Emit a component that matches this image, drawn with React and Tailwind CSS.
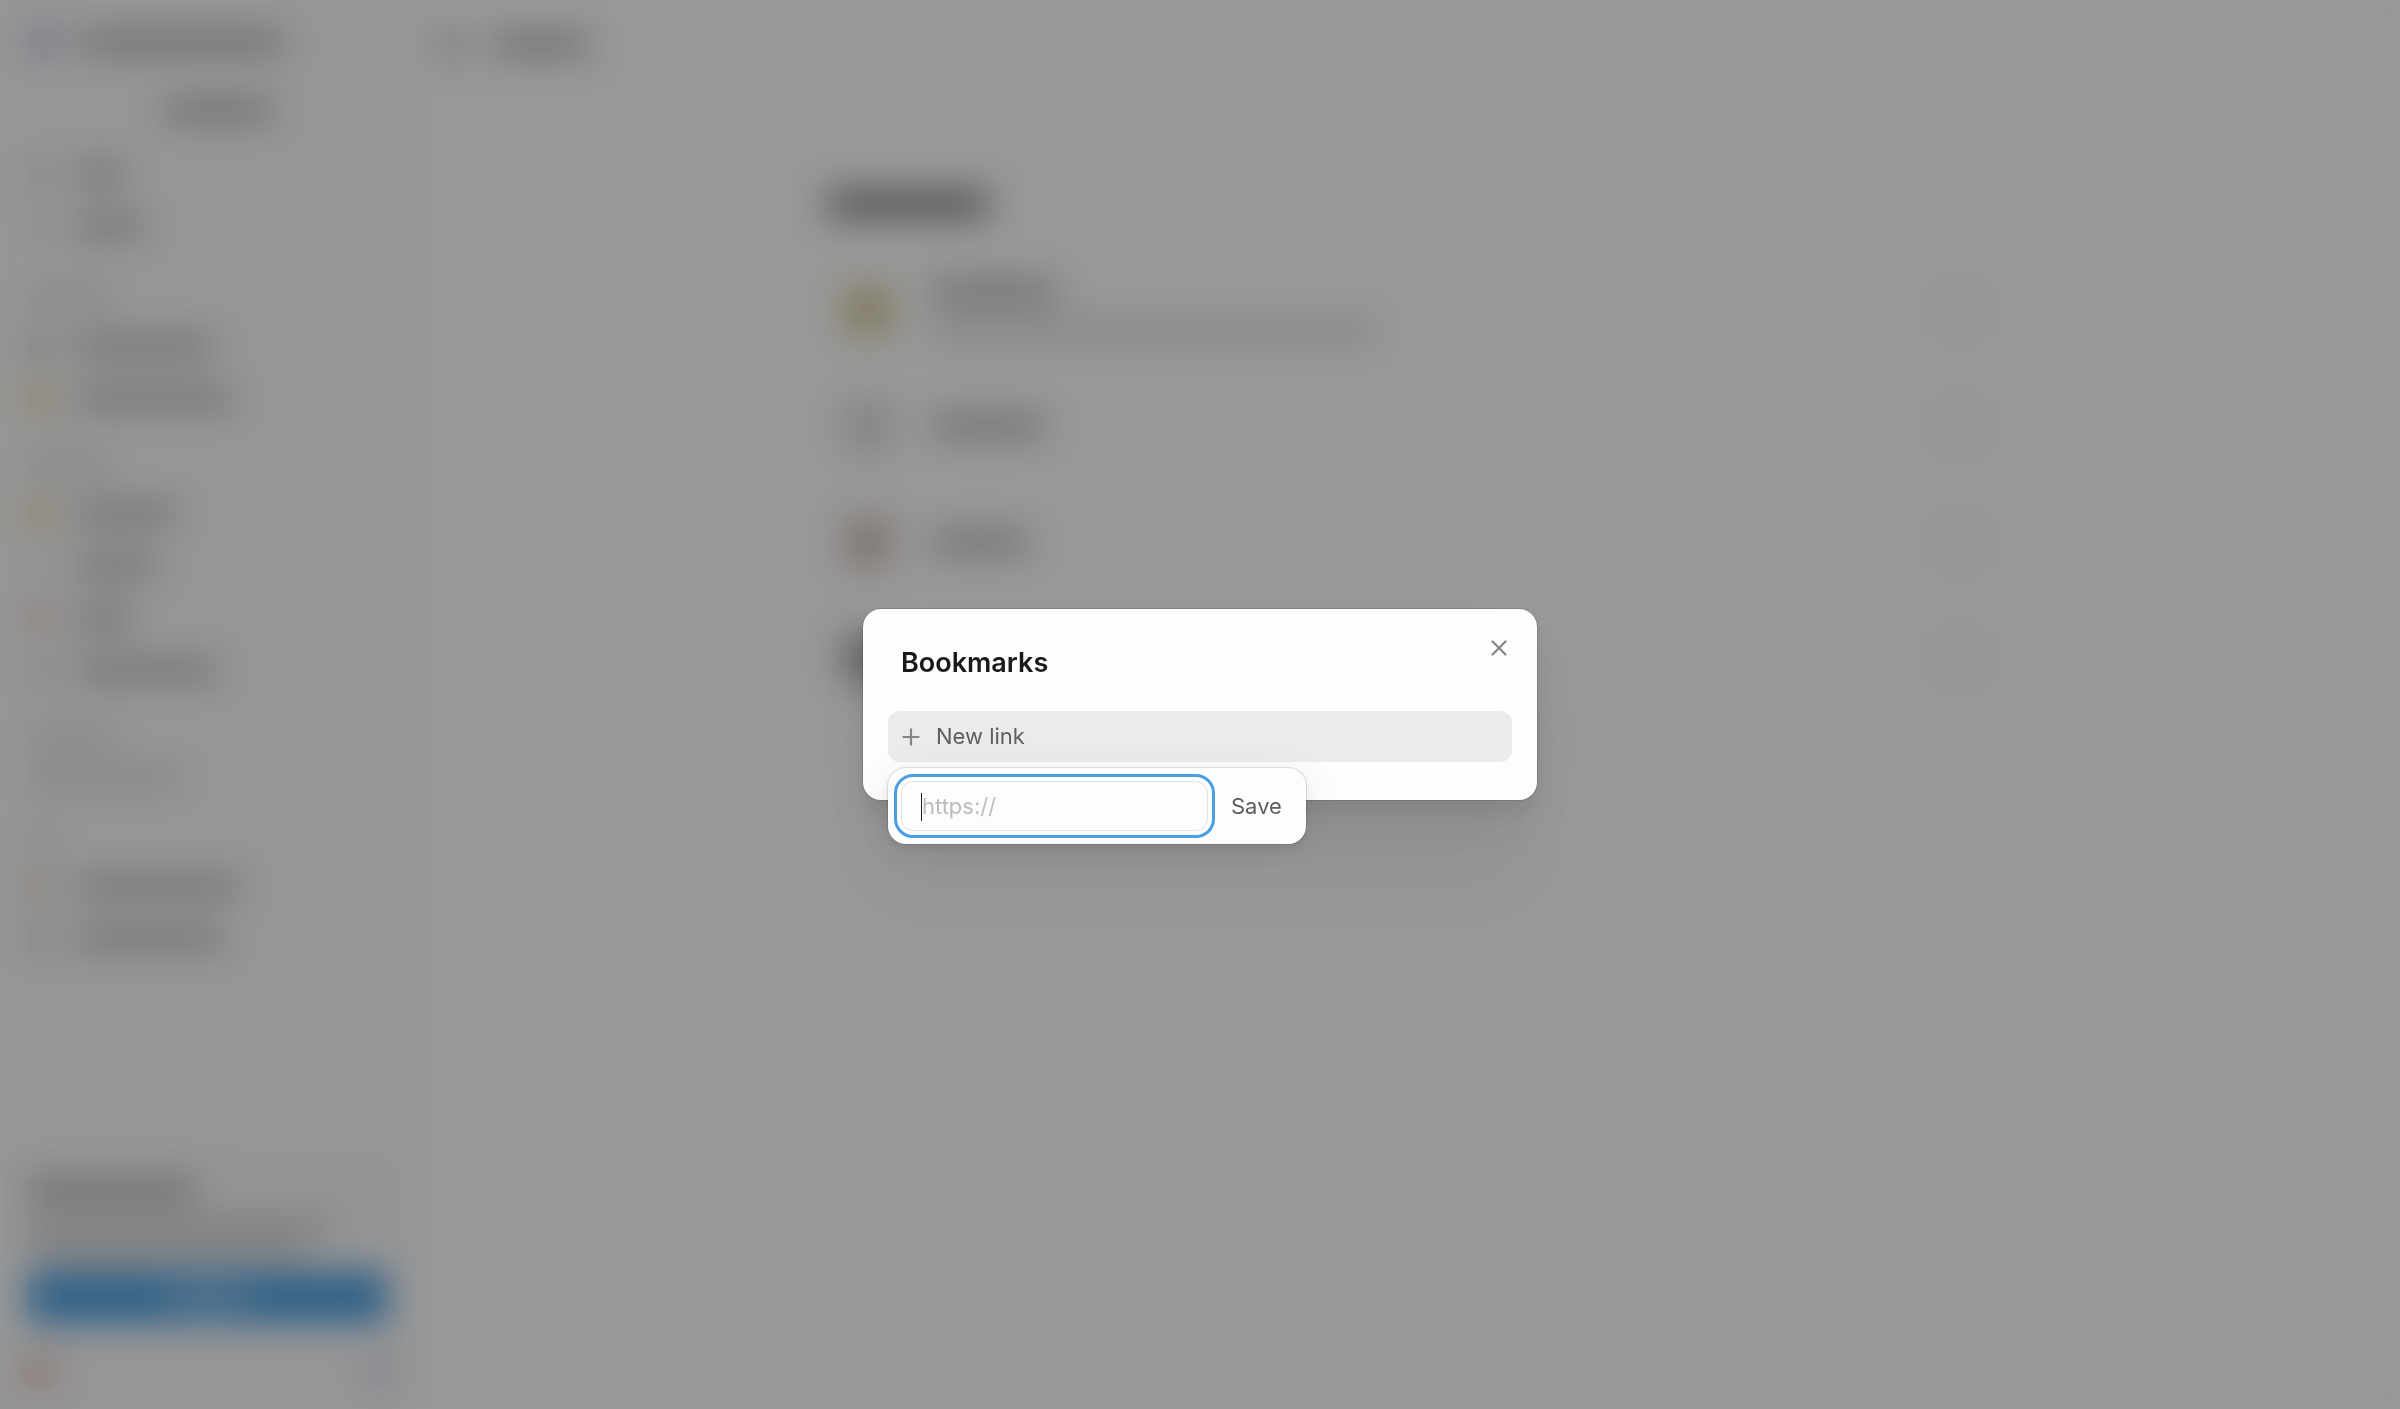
import { useState } from "react";
import { Plus, X } from "lucide-react";
import clsx from "clsx";

const navSections = [
    {
        label: "w-20",
        items: [
            { icon: "bg-[#c4c4c4]", width: "w-[136px]" },
            { icon: "bg-[#ecd092]", width: "w-[156px]" },
        ],
    },
    {
        label: "w-20",
        items: [
            { icon: "bg-[#ecd092]", width: "w-[100px]" },
            { icon: "bg-[#f0f0f4]", width: "w-20" },
            { icon: "bg-[#e4c8be]", width: "w-14" },
            { icon: "bg-[#dadada]", width: "w-[140px]" },
        ],
    },
];

const helpItems = [
    { icon: "bg-[#dccabc]", width: "w-[164px]" },
    { icon: "bg-[#cccccc]", width: "w-[148px]" },
];

const channels = [
    { icon: "bg-[#d8cc9c]", width: "w-[124px]", about: true },
    { icon: "bg-[#dadada]", width: "w-28" },
    { icon: "bg-[#d2c2ba]", width: "w-24" },
    { icon: "bg-[#a0a0a0]", width: "w-28" },
];

const Bar = ({ className }) => <div className={clsx("rounded", className)} />;

const NavItem = ({ icon, width }) => (
    <div className="flex h-[52px] items-center gap-6 px-3">
        <Bar className={clsx("size-6", icon)} />
        <Bar className={clsx("h-4 bg-[#a8a8a8]", width)} />
    </div>
);

const SectionLabel = ({ width }) => (
    <div className="flex h-11 items-center px-3">
        <Bar className={clsx("h-3 bg-[#cccccc]", width)} />
    </div>
);

const Sidebar = () => (
    <aside className="flex w-[416px] shrink-0 flex-col bg-[#fafafa] px-4 pt-4 pb-[18px]">
        <div className="flex h-[52px] items-center gap-5 px-3">
            <div className="size-8 rounded-full bg-[#bcc4e0]" />
            <Bar className="h-4 w-[204px] bg-[#9e9e9e]" />
        </div>
        <div className="mt-4 flex h-[52px] items-center justify-center pl-5">
            <Bar className="h-4 w-[108px] bg-[#9e9e9e]" />
        </div>

        <div className="mt-3">
            <NavItem icon="bg-[#d8d8d8]" width="w-12" />
            <NavItem icon="bg-[#e6e6e6]" width="w-[68px]" />
        </div>

        <div className="mt-6 flex flex-col gap-5">
            {navSections.map((section, i) => (
                <div key={i}>
                    <SectionLabel width={section.label} />
                    {section.items.map((item, j) => (
                        <NavItem key={j} {...item} />
                    ))}
                </div>
            ))}

            <div>
                <SectionLabel width="w-[88px]" />
                <div className="flex h-9 items-center px-3">
                    <Bar className="h-4 w-[152px] bg-[#d2d2d2]" />
                </div>
            </div>

            <div>
                <SectionLabel width="w-7" />
                {helpItems.map((item, i) => (
                    <NavItem key={i} {...item} />
                ))}
            </div>
        </div>

        <div className="mt-auto rounded-2xl bg-[#f8f8f8] px-3 pt-5">
            <Bar className="h-5 w-[168px] bg-[#aeaeae]" />
            <Bar className="mt-5 h-3 w-[304px] bg-[#bebebe]" />
            <Bar className="mt-3 h-3 w-[276px] bg-[#bebebe]" />
            <div className="mt-4 flex h-[52px] items-center justify-center rounded-xl bg-[#4b9fe2]">
                <Bar className="h-4 w-[84px] bg-[#a0ccf0]" />
            </div>
        </div>
        <div className="mt-7 flex h-10 items-center justify-between px-1">
            <div className="size-10 rounded-full bg-[#e8d0ca]" />
            <div className="size-8 rounded-full bg-[#d4dae8]" />
        </div>
    </aside>
);

const Channels = () => (
    <main className="flex min-w-0 flex-1 flex-col">
        <header className="flex h-[88px] items-center gap-7 border-b border-[#f0f0f0] px-6">
            <Bar className="size-6 bg-[#bcbcbc]" />
            <Bar className="h-4 w-24 bg-[#9c9c9c]" />
        </header>
        <div className="mx-auto w-full max-w-[1160px] pt-[104px]">
            <Bar className="h-6 w-[160px] bg-[#787878]" />
            <div className="mt-9 flex flex-col">
                {channels.map((channel, i) => (
                    <div key={i} className="flex h-[116px] items-center justify-between pr-1 pl-4">
                        <div className="flex items-center gap-10">
                            <div className={clsx("size-12 rounded-xl", channel.icon)} />
                            <div className="flex flex-col gap-5">
                                <Bar className={clsx("h-5 bg-[#b0b0b0]", channel.width)} />
                                {channel.about && <Bar className="h-4 w-[440px] bg-[#d4d4d4]" />}
                            </div>
                        </div>
                        <div className="size-12 rounded-full border-2 border-[#e8e8e8]" />
                    </div>
                ))}
            </div>
        </div>
    </main>
);

const LinkPopover = ({ url, setUrl, onSave }) => (
    <form
        onSubmit={onSave}
        className="absolute top-full left-0 mt-[6px] flex items-center rounded-[18px] bg-[#fdfdfd] p-[13px] shadow-[0_0_0_1px_rgba(0,0,0,0.1),0_4px_8px_rgba(0,0,0,0.08),0_8px_40px_rgba(0,0,0,0.08)]"
    >
        <div className="relative">
            <input
                type="text"
                aria-label="Link URL"
                placeholder="https://"
                value={url}
                onChange={(e) => setUrl(e.target.value)}
                className="block h-[50px] w-[307px] rounded-xl border border-[#e2e2e2] px-5 text-[22px] text-[#1a1a1a] caret-transparent outline-3 outline-offset-4 outline-[#4a9ee4] placeholder:text-[#bbbbbb]"
            />
            {!url && <span className="absolute top-3 left-5 h-7 w-px bg-[#1a1a1a]" />}
        </div>
        <button type="submit" className="h-[50px] pr-[11px] pl-[23px] text-[22px] text-[#5e5e5e]">
            Save
        </button>
    </form>
);

const BookmarksDialog = () => {
    const [url, setUrl] = useState("");

    const handleSave = (e) => {
        e.preventDefault();
        setUrl("");
    };

    return (
        <div
            role="dialog"
            aria-labelledby="bookmarks-title"
            className="w-[674px] rounded-[18px] bg-[#fdfdfd] px-[25px] pt-[34px] pb-[38px] shadow-[0_0_0_1px_rgba(0,0,0,0.12),0_12px_24px_rgba(0,0,0,0.08),0_32px_64px_rgba(0,0,0,0.06),0_100px_80px_rgba(0,0,0,0.03)]"
        >
            <div className="flex h-[68px] items-start justify-between pl-[13px]">
                <h2 id="bookmarks-title" className="text-[27px] leading-10 font-semibold text-[#1a1a1a]">
                    Bookmarks
                </h2>
                <button type="button" aria-label="Close" className="-mt-2 text-[#858585]">
                    <X size={26} strokeWidth={2} />
                </button>
            </div>
            <div className="relative">
                <button
                    type="button"
                    className="flex h-[51px] w-full items-center gap-3 rounded-xl bg-[#ebebeb] px-2.5 text-[22px] text-[#5e5e5e]"
                >
                    <Plus size={26} strokeWidth={2} className="text-[#858585]" />
                    New link
                </button>
                <LinkPopover url={url} setUrl={setUrl} onSave={handleSave} />
            </div>
        </div>
    );
};

const App = () => {
    return (
        <div className="relative flex min-h-screen bg-[#fdfdfd] font-[Inter,sans-serif]">
            <div aria-hidden="true" className="flex min-w-0 flex-1">
                <Sidebar />
                <Channels />
            </div>

            <div className="fixed inset-0 flex items-center justify-center bg-black/40 backdrop-blur-[18px]">
                <BookmarksDialog />
            </div>
        </div>
    );
};

export default App;
